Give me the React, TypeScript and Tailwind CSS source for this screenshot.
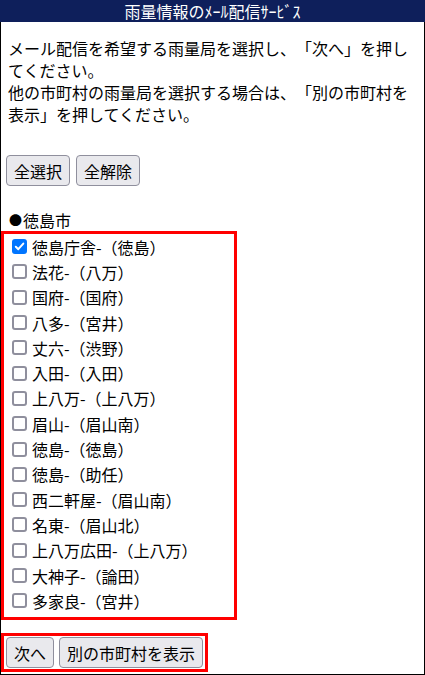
const stations = [
  { name: "徳島庁舎-（徳島）", checked: true },
  { name: "法花-（八万）" },
  { name: "国府-（国府）" },
  { name: "八多-（宮井）" },
  { name: "丈六-（渋野）" },
  { name: "入田-（入田）" },
  { name: "上八万-（上八万）" },
  { name: "眉山-（眉山南）" },
  { name: "徳島-（徳島）" },
  { name: "徳島-（助任）" },
  { name: "西二軒屋-（眉山南）" },
  { name: "名東-（眉山北）" },
  { name: "上八万広田-（上八万）" },
  { name: "大神子-（論田）" },
  { name: "多家良-（宮井）" },
];

function Btn({ children }: { children: React.ReactNode }) {
  return (
    <button
      type="button"
      className="h-[31px] px-[7px] text-[16px] leading-[22px] text-black bg-[#e9e9ed] border border-[#8f8f9d] rounded-[4px] [text-spacing-trim:space-all]"
    >
      {children}
    </button>
  );
}

// drawn checkbox so the size and border weight match
function Check({ checked }: { checked?: boolean }) {
  if (checked) {
    return (
      <span className="block w-[15px] h-[15px] rounded-[3px] bg-[#0075ff] flex items-center justify-center">
        <svg width="11" height="11" viewBox="0 0 11 11" fill="none">
          <path d="M1.8 5.8 L4.3 8.2 L9.3 2.6" stroke="#fff" strokeWidth="2" strokeLinecap="round" strokeLinejoin="round" />
        </svg>
      </span>
    );
  }
  return <span className="block w-[15px] h-[15px] rounded-[3px] border-2 border-[#8f8f9d] bg-white" />;
}

export default function App() {
  return (
    <div
      className="w-[425px] min-h-[675px] bg-white text-black flex flex-col [text-spacing-trim:space-all]"
      style={{ fontFamily: '"Noto Sans CJK JP", "Noto Sans", sans-serif' }}
    >
      {/* title bar */}
      <div className="h-[22px] bg-[#0e1f5b] text-white text-[16px] leading-[22px] text-center">
        雨量情報のﾒｰﾙ配信ｻｰﾋﾞｽ
      </div>

      <div className="flex-1 border-x border-b border-black flex flex-col">
        <p className="mt-[15px] px-[7px] text-[16px] leading-[22px] [text-spacing-trim:space-all]">
          メール配信を希望する雨量局を選択し、「次へ」を押してください。
          <br />
          他の市町村の雨量局を選択する場合は、「別の市町村を表示」を押してください。
        </p>

        <div className="mt-[30px] ml-[5px] flex gap-[6px]">
          <Btn>全選択</Btn>
          <Btn>全解除</Btn>
        </div>

        <div className="mt-[23px] pl-[8px] text-[16px] leading-[22px] flex items-center">
          <span className="text-[13px] mr-[1px]">●</span>
          <span>徳島市</span>
        </div>

        {/* station list */}
        <div className="w-[236px] border-[3px] border-[#ff0000] pb-[4px]">
          {stations.map((s) => (
            <label key={s.name} className="h-[25.3px] flex items-center text-[16px]">
              <span className="flex ml-[8px] mr-[5px]">
                <Check checked={s.checked} />
              </span>
              <span>{s.name}</span>
            </label>
          ))}
        </div>

        <div className="mt-[13px] self-start flex gap-[5px] px-[2px] py-[1px] border-[3px] border-[#ff0000]">
          <Btn>次へ</Btn>
          <Btn>別の市町村を表示</Btn>
        </div>
      </div>
    </div>
  );
}
